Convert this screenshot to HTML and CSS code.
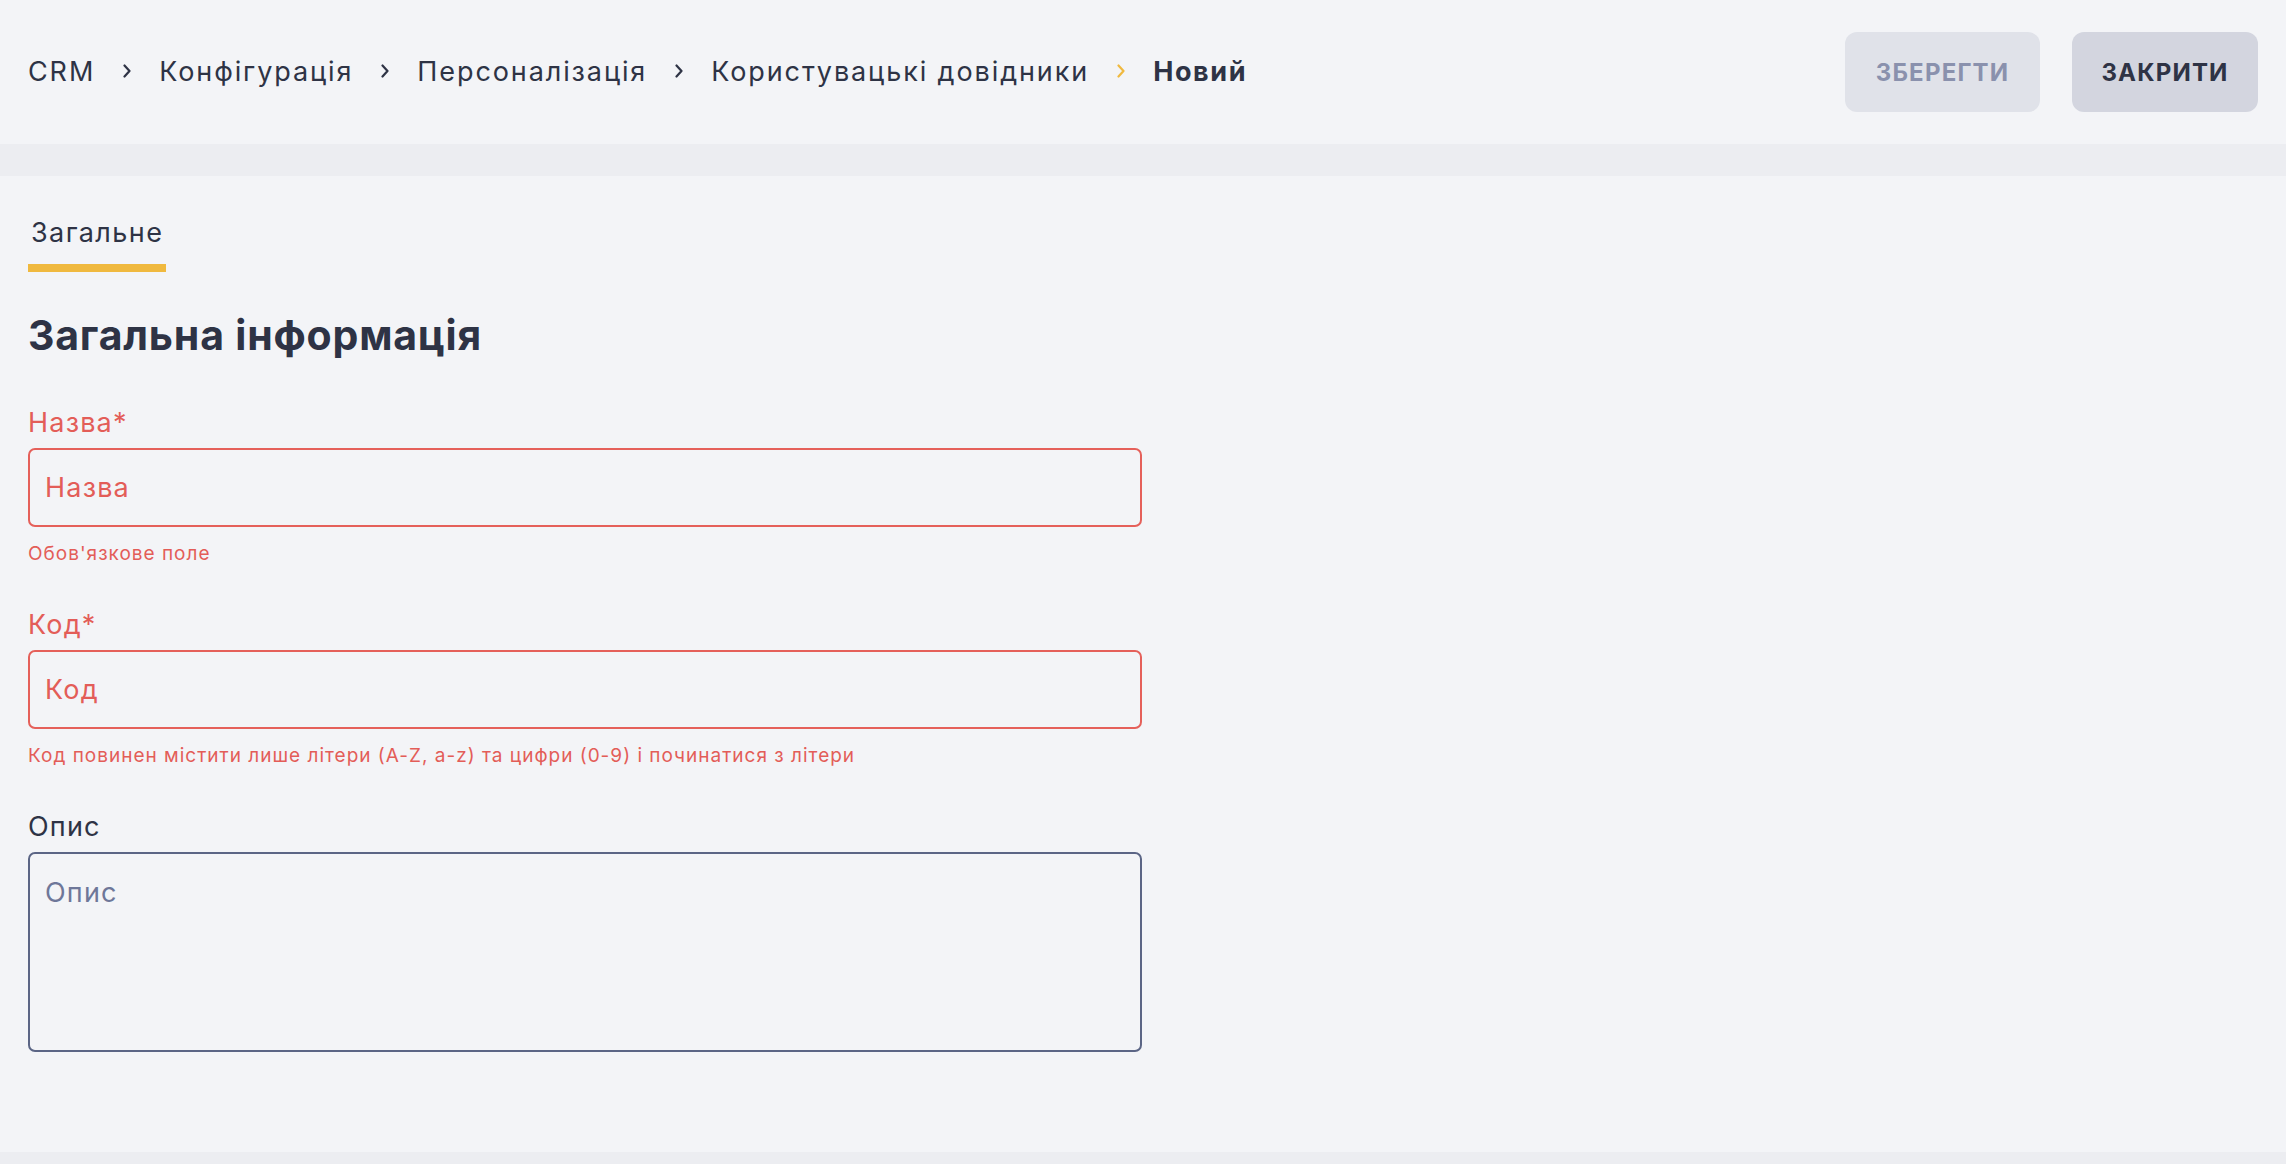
FILE: index.html
```html
<!DOCTYPE html>
<html>
<head>
<title>Новий довідник</title>
<meta charset="UTF-8">
<meta name="viewport" content="width=device-width, initial-scale=1.0">
<link rel="stylesheet" href="styles.css">
</head>
<body>

<!-- HEADER -->
<div class="topbar">
	<div class="crumbs">
		<span class="crumb">CRM</span>
		<svg class="chev" viewBox="0 0 8 14"><path d="M1.5 1.5 L6.5 7 L1.5 12.5"/></svg>
		<span class="crumb">Конфігурація</span>
		<svg class="chev" viewBox="0 0 8 14"><path d="M1.5 1.5 L6.5 7 L1.5 12.5"/></svg>
		<span class="crumb">Персоналізація</span>
		<svg class="chev" viewBox="0 0 8 14"><path d="M1.5 1.5 L6.5 7 L1.5 12.5"/></svg>
		<span class="crumb">Користувацькі довідники</span>
		<svg class="chev last" viewBox="0 0 8 14"><path d="M1.5 1.5 L6.5 7 L1.5 12.5"/></svg>
		<span class="crumb current">Новий</span>
	</div>
	<div class="actions">
		<button class="btn btn-save">Зберегти</button>
		<button class="btn btn-close">Закрити</button>
	</div>
</div>

<div class="band"></div>

<!-- FORM -->
<div class="page">
	<div class="tabs">
		<div class="tab active">Загальне</div>
	</div>

	<h2 class="section-title">Загальна інформація</h2>

	<div class="field error">
		<label class="label">Назва*</label>
		<div class="input">Назва</div>
		<div class="hint">Обов'язкове поле</div>
	</div>

	<div class="field error">
		<label class="label">Код*</label>
		<div class="input">Код</div>
		<div class="hint">Код повинен містити лише літери (A-Z, a-z) та цифри (0-9) і починатися з літери</div>
	</div>

	<div class="field">
		<label class="label">Опис</label>
		<div class="input textarea">Опис</div>
	</div>
</div>

<div class="band bottom"></div>

</body>
</html>
```

FILE: styles.css
```css
body{
	margin: 0px;
	font-family: Inter, "Noto Sans", sans-serif;
	color: #2e3345;
	background: #f3f4f7;
}

/*********************************************************
HEADER
**********************************************************/

.topbar{
	height: 144px;
	padding: 0px 28px;
	display: flex;
	align-items: center;
	justify-content: space-between;
}

.crumbs{
	display: flex;
	align-items: center;
	gap: 28px;
	font-size: 27px;
	letter-spacing: 1.9px;
	margin-top: -2px;
}

.crumb.current{
	font-weight: 700;
	letter-spacing: 1.6px;
}

.chev{
	width: 8px;
	height: 14px;
	fill: none;
	stroke: #2e3345;
	stroke-width: 2.2;
	stroke-linecap: round;
	stroke-linejoin: round;
}

.chev.last{
	stroke: #f0b93f;
}

.actions{
	display: flex;
	gap: 32px;
}

.btn{
	height: 80px;
	padding: 0px;
	border: none;
	border-radius: 12px;
	font-family: inherit;
	font-size: 24px;
	font-weight: 700;
	letter-spacing: 1.2px;
	text-transform: uppercase;
	cursor: pointer;
}

.btn-save{
	background: #e0e2e9;
	color: #8a91ad;
	width: 195px;
}

.btn-close{
	background: #d3d5df;
	color: #2e3345;
	width: 186px;
}

.band{
	height: 32px;
	background: #ecedf1;
}

.band.bottom{
	height: 12px;
	margin-top: 100px;
}

/*********************************************************
FORM
**********************************************************/

.page{
	padding: 0px 28px;
}

.tabs{
	display: flex;
	padding-top: 41px;
}

.tab{
	font-size: 27px;
	letter-spacing: 1.4px;
	padding: 0px 3px 15px 3px;
	border-bottom: 8px solid #f0b93f;
	line-height: 32px;
}

.section-title{
	margin: 38px 0px 0px 0px;
	font-size: 41px;
	font-weight: 700;
	letter-spacing: 0.8px;
	line-height: 50px;
}

.field{
	margin-top: 46px;
	width: 1114px;
}

.field + .field{
	margin-top: 42px;
}

.label{
	display: block;
	font-size: 27px;
	letter-spacing: 1.2px;
	line-height: 34px;
	margin-bottom: 8px;
}

.input{
	box-sizing: border-box;
	height: 79px;
	border: 2px solid #5b6585;
	border-radius: 7px;
	padding: 0px 15px;
	font-size: 27px;
	letter-spacing: 1.2px;
	line-height: 75px;
	color: #6e7799;
}

.textarea{
	height: 200px;
	line-height: 34px;
	padding-top: 22px;
}

.hint{
	font-size: 19px;
	letter-spacing: 1px;
	margin-top: 15px;
	line-height: 24px;
}

.field.error .label,
.field.error .input,
.field.error .hint{
	color: #e35d58;
}

.field.error .input{
	border-color: #e5605a;
}
```
